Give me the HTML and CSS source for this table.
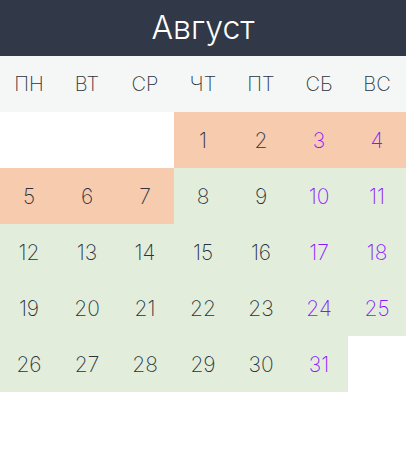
FILE: index.html
```html
<!DOCTYPE html>
<html lang="ru">
<head>
<meta charset="utf-8">
<link rel="stylesheet" href="styles.css">
</head>
<body>
<div class="cal">
  <div class="title">Август</div>
  <div class="grid week">
    <div>ПН</div><div>ВТ</div><div>СР</div><div>ЧТ</div><div>ПТ</div><div>СБ</div><div>ВС</div>
  </div>
  <div class="grid days">
    <div></div><div></div><div></div>
    <div class="o">1</div><div class="o">2</div><div class="o we">3</div><div class="o we">4</div>
    <div class="o">5</div><div class="o">6</div><div class="o">7</div>
    <div class="g">8</div><div class="g">9</div><div class="g we">10</div><div class="g we">11</div>
    <div class="g">12</div><div class="g">13</div><div class="g">14</div><div class="g">15</div><div class="g">16</div><div class="g we">17</div><div class="g we">18</div>
    <div class="g">19</div><div class="g">20</div><div class="g">21</div><div class="g">22</div><div class="g">23</div><div class="g we">24</div><div class="g we">25</div>
    <div class="g">26</div><div class="g">27</div><div class="g">28</div><div class="g">29</div><div class="g">30</div><div class="g we">31</div><div></div>
  </div>
</div>
</body>
</html>
```
FILE: styles.css
```css
html, body { margin: 0; padding: 0; background: #fff; }
body { font-family: Inter, Roboto, "Noto Sans", sans-serif; font-weight: 200; color: #2c3340; }
.cal { width: 406px; }
.title {
  height: 56px;
  background: #313848;
  color: #fff;
  font-size: 32px;
  font-weight: 300;
  display: flex;
  align-items: center;
  justify-content: center;
  padding-bottom: 2px;
  box-sizing: border-box;
}
.grid { display: grid; grid-template-columns: repeat(7, 58px); }
.grid > div { display: flex; align-items: center; justify-content: center; }
.week { background: #f5f7f6; }
.week > div { height: 56px; font-size: 20px; }
.days > div { height: 56px; font-size: 21px; }
.o { background: #f7cbad; }
.g { background: #e2eedb; }
.we { color: #8a17ff; }
```
